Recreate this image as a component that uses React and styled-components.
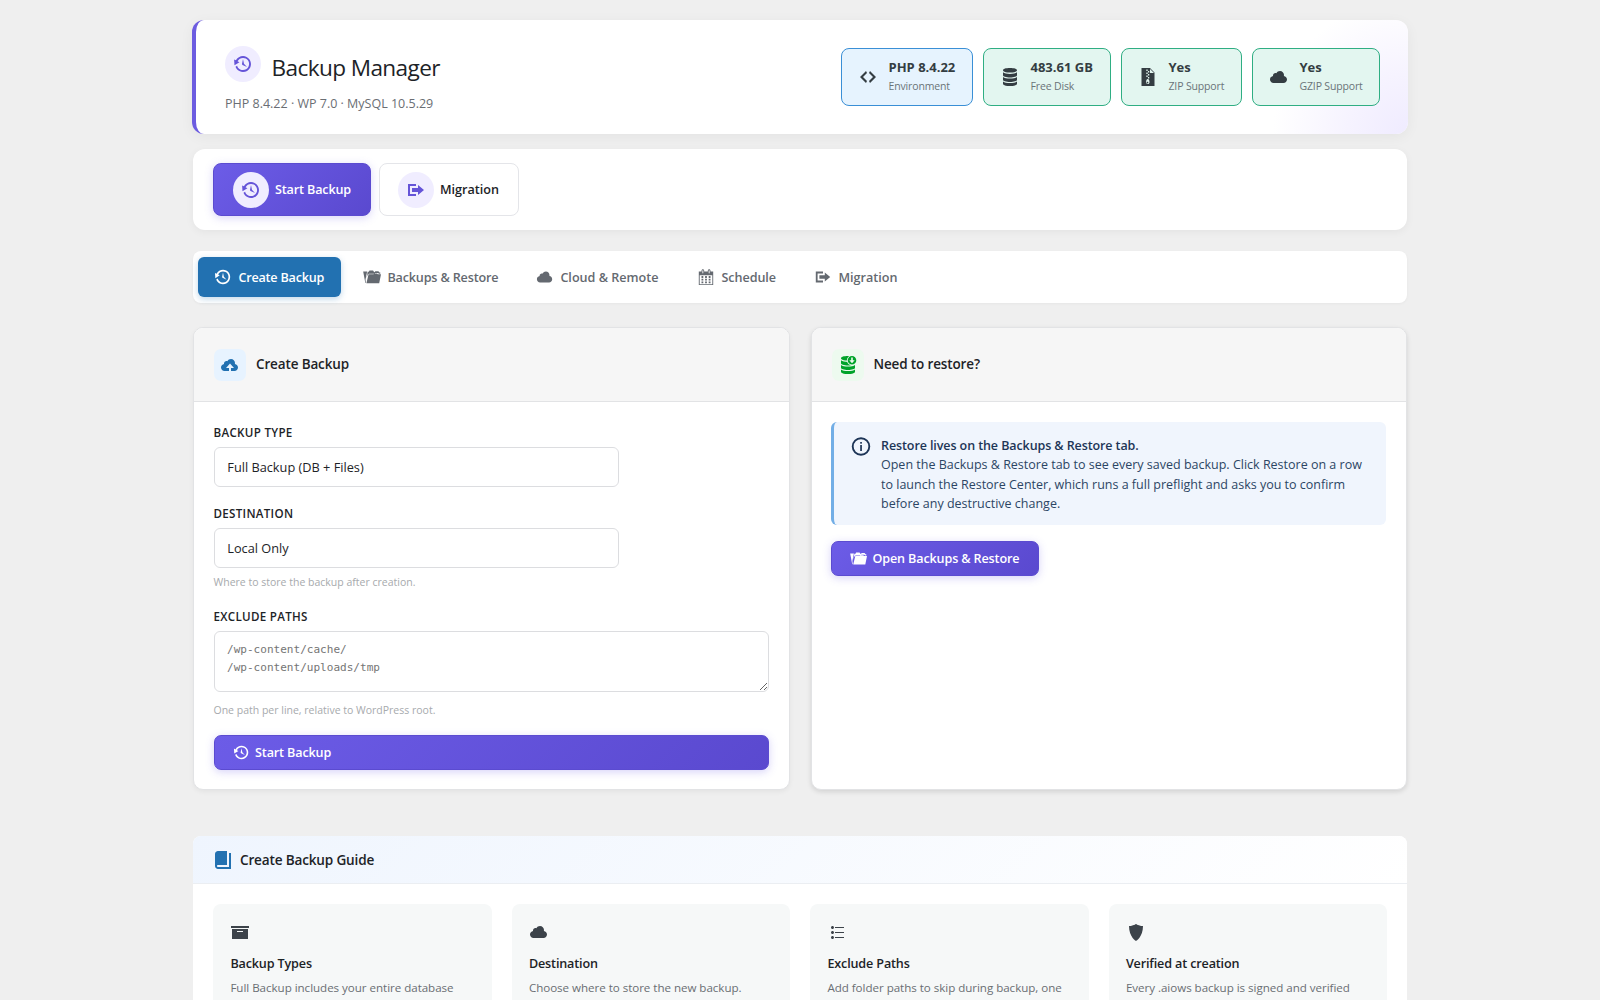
import styled, { createGlobalStyle } from "styled-components";

const GlobalStyle = createGlobalStyle`
  * {
    box-sizing: border-box;
  }

  body {
    margin: 0;
    height: 1000px;
    overflow: hidden;
    background: #efefef;
    color: #1d2327;
    font-family: "Open Sans", "Noto Sans", sans-serif;
    font-size: 12.5px;
  }
`;

const Page = styled.div`
  width: 1214px;
  height: 1000px;
  margin-left: 193px;
  padding-top: 20px;
`;

const Hero = styled.header`
  display: flex;
  justify-content: space-between;
  align-items: flex-start;
  height: 114px;
  margin: 0 -1px 15px;
  padding: 26px 28px 0 29px;
  border-left: 4px solid #6c5ce0;
  border-radius: 12px;
  background:
    radial-gradient(circle at 100% 100%, #efebff 0, #f6f3ff 60px, rgba(255, 255, 255, 0) 135px),
    #fff;
  box-shadow: 0 3px 14px rgba(0, 0, 0, 0.05);
`;

const HeroTitle = styled.div`
  display: flex;
  align-items: flex-start;
  height: 36px;
  gap: 10.5px;

  h1 {
    margin: 6px 0 0;
    font-size: 22.6px;
    font-weight: 400;
    line-height: 32px;
    letter-spacing: -0.6px;
  }
`;

const HeroMeta = styled.p`
  margin: 11.5px 0 0;
  color: #6a6e73;
  font-size: 12.5px;
  line-height: 20px;
`;

const Circle = styled.span`
  display: flex;
  align-items: center;
  justify-content: center;
  width: 36px;
  height: 36px;
  border-radius: 50%;
  background: #f0edff;
  color: #6554d8;
`;

const Stats = styled.div`
  display: flex;
  gap: 10px;
  padding-top: 2px;
`;

const StatBox = styled.div`
  display: flex;
  align-items: center;
  gap: 10.5px;
  width: ${(props) => props.$width}px;
  height: 58px;
  padding-left: 16px;
  border: 1px solid ${(props) => (props.$info ? "#3a8fd6" : "#2fae83")};
  border-radius: 8px;
  background: ${(props) => (props.$info ? "#e6f3fe" : "#e3f6f0")};
  color: #343d42;
  white-space: nowrap;

  strong {
    display: block;
    font-size: 13px;
    font-weight: 700;
    line-height: 19px;
  }

  small {
    display: block;
    color: #6a7378;
    font-size: 10.5px;
    line-height: 19px;
    letter-spacing: -0.15px;
  }
`;

const Toolbar = styled.div`
  display: flex;
  gap: 8px;
  height: 81px;
  margin-bottom: 21px;
  padding: 14px 20px;
  border-radius: 12px;
  background: #fff;
  box-shadow: 0 2px 8px rgba(0, 0, 0, 0.05);
`;

const ToolButton = styled.button`
  display: flex;
  align-items: center;
  gap: 6px;
  width: ${(props) => props.$width}px;
  height: 53px;
  padding: 0 0 0 ${(props) => (props.$primary ? 19 : 18)}px;
  border: 1px solid ${(props) => (props.$primary ? "#5b4bd0" : "#e4e5e9")};
  border-radius: 8px;
  background: ${(props) =>
    props.$primary ? "linear-gradient(135deg, #6c5ce7, #5a49cf)" : "#fff"};
  box-shadow: ${(props) =>
    props.$primary ? "0 2px 8px rgba(108, 92, 231, 0.25)" : "none"};
  color: ${(props) => (props.$primary ? "#fff" : "#1d2327")};
  font: 600 12.6px "Open Sans", sans-serif;
  letter-spacing: ${(props) => (props.$primary ? "-0.15px" : "0")};
  white-space: nowrap;
`;

const Tabs = styled.nav`
  display: flex;
  gap: 6px;
  height: 52px;
  margin-bottom: 24px;
  padding: 6px 5.4px;
  border-radius: 8px;
  background: #fff;
  box-shadow: 0 1px 3px rgba(0, 0, 0, 0.04);
`;

const Tab = styled.button`
  display: flex;
  align-items: center;
  gap: 6px;
  width: ${(props) => props.$width}px;
  height: 40px;
  padding: 0 0 0 16px;
  border: 0;
  border-radius: 6px;
  background: ${(props) => (props.$active ? "#2271b1" : "transparent")};
  box-shadow: ${(props) =>
    props.$active ? "0 2px 6px rgba(34, 113, 177, 0.28)" : "none"};
  color: ${(props) => (props.$active ? "#fff" : "#646970")};
  font: 600 12.6px "Open Sans", sans-serif;
  letter-spacing: ${(props) => props.$track}px;
  white-space: nowrap;
`;

const Columns = styled.div`
  display: grid;
  grid-template-columns: 1fr 1fr;
  gap: 21px;
  height: 463px;
  margin-bottom: 46px;
`;

const Card = styled.section`
  border: 1px solid #e2e3e5;
  border-radius: 10px;
  background: #fff;
  box-shadow: 0 2px 5px rgba(0, 0, 0, ${(props) => (props.$raised ? 0.12 : 0.05)});
  overflow: hidden;
`;

const CardHeader = styled.div`
  display: flex;
  align-items: center;
  gap: 10px;
  height: 74px;
  padding: 0 20px;
  border-bottom: 1px solid #e2e3e5;
  background: #f6f6f6;

  h2 {
    margin: 0 0 2px;
    font-size: 13.5px;
    font-weight: 600;
    line-height: 20px;
    letter-spacing: -0.14px;
  }
`;

const IconTile = styled.span`
  display: flex;
  align-items: center;
  justify-content: center;
  width: 32px;
  height: 32px;
  border-radius: 7px;
  background: ${(props) => props.$bg};
  color: ${(props) => props.$color};
`;

const CardBody = styled.div`
  padding: 20px 20px 20px 19.5px;
`;

const Label = styled.label`
  display: block;
  height: 25px;
  padding-top: 1px;
  font-size: 11.6px;
  font-weight: 600;
  line-height: 20px;
  letter-spacing: 0.3px;
  text-transform: uppercase;
`;

const SelectBox = styled.div`
  width: 405px;
  height: 40px;
  margin: 0 0 ${(props) => props.$gap}px 0.8px;
  padding-left: 12px;
  border: 1px solid #dcdde0;
  border-radius: 6px;
  font-size: 12.75px;
  line-height: 39px;
`;

const Hint = styled.p`
  margin: 0 0 ${(props) => props.$gap}px;
  color: #a7aaad;
  font-size: 10.5px;
  line-height: 16px;
`;

const PathsInput = styled.textarea`
  display: block;
  width: 100%;
  height: 61px;
  margin-bottom: 10px;
  padding: 9px 12.5px;
  border: 1px solid #dcdde0;
  border-radius: 6px;
  font: 11.05px/18.2px "DejaVu Sans Mono", monospace;
  resize: vertical;
  overflow: hidden;

  &::placeholder {
    color: #757575;
  }
`;

const PrimaryButton = styled.button`
  display: flex;
  align-items: center;
  gap: 5.5px;
  width: ${(props) => props.$width};
  height: 35px;
  padding: 0 0 0 18px;
  border: 1px solid #5b4bd0;
  border-radius: 7px;
  background: linear-gradient(135deg, #6c5ce7, #5a49cf);
  box-shadow: 0 2px 8px rgba(108, 92, 231, 0.28);
  color: #fff;
  font: 600 12.6px "Open Sans", sans-serif;
  letter-spacing: -0.14px;
  white-space: nowrap;
`;

const Notice = styled.div`
  display: flex;
  gap: 9.5px;
  height: 103px;
  margin-bottom: 16px;
  padding: 13.5px 14px 0 15.5px;
  border-left: 3px solid #72aee6;
  border-radius: 6px;
  background: #f0f5fd;
  color: #2c4564;
  white-space: nowrap;

  p {
    margin: 0;
    line-height: 19.6px;
  }

  strong {
    color: #1d3557;
    font-weight: 600;
    letter-spacing: -0.09px;
  }
`;

const Guide = styled.section`
  height: 164px;
  border-radius: 8px 8px 0 0;
  background: #fff;
  overflow: hidden;
`;

const GuideHeader = styled.div`
  display: flex;
  align-items: center;
  gap: 7px;
  height: 48px;
  padding: 0 20px;
  border-bottom: 1px solid #ebeef2;
  background: linear-gradient(135deg, #eff5fe, #fff);

  svg {
    color: #2271b1;
  }

  h2 {
    margin: 0;
    font-size: 13.6px;
    font-weight: 600;
    letter-spacing: -0.18px;
  }
`;

const GuideGrid = styled.div`
  display: grid;
  grid-template-columns: repeat(4, 1fr);
  gap: 20px;
  padding: 20px 20px 0;
`;

const GuideItem = styled.article`
  height: 96px;
  padding: 18px 17.4px 0;
  border-radius: 8px 8px 0 0;
  background: #f6f8f8;
  color: #3c434a;

  h3 {
    margin: 12px 0 4px;
    color: #1d2327;
    font-size: 12.6px;
    font-weight: 600;
    line-height: 20px;
    letter-spacing: -0.15px;
  }

  p {
    margin: 0;
    color: #6a6e73;
    font-size: 11.6px;
    line-height: 19px;
    letter-spacing: -0.04px;
    white-space: nowrap;
  }
`;

const Svg = styled.svg`
  display: block;
  flex: none;
  fill: currentColor;
`;

const ICONS = {
  backup:
    "M13.65 2.88c3.93 2.01 5.48 6.84 3.47 10.77s-6.83 5.48-10.77 3.47c-1.87-.96-3.2-2.56-3.86-4.4l1.64-1.03c.45 1.57 1.52 2.95 3.08 3.76 3.01 1.54 6.69.35 8.23-2.66 1.55-3.01.36-6.69-2.65-8.24C9.78 3.01 6.1 4.2 4.56 7.21l1.88.97-4.95 3.08-.39-5.82 1.78.91C4.9 2.4 9.75.89 13.65 2.88zm-4.36 7.83C9.11 10.53 9 10.28 9 10c0-.07.03-.12.04-.19h-.01L10 5l.97 4.81L14 13l-4.5-2.12.02-.02c-.08-.04-.16-.09-.23-.15z",
  migrate: "M4 6h6V4H2v12.01h8V14H4V6zm2 2h6V5l6 5-6 5v-3H6V8z",
  cloud:
    "M14.9 9c1.8.2 3.1 1.7 3.1 3.5 0 1.9-1.6 3.5-3.5 3.5h-10C2.6 16 1 14.4 1 12.5 1 10.7 2.3 9.3 4.1 9 4 8.9 4 8.7 4 8.5 4 7.1 5.1 6 6.5 6c.3 0 .7.1.9.2C8.1 4.9 9.4 4 11 4c2.2 0 4 1.8 4 4 0 .4-.1.7-.1 1z",
  cloudUpload:
    "M14.9 9c1.8.2 3.1 1.7 3.1 3.5 0 1.9-1.6 3.5-3.5 3.5H11v-3h3l-4-4.5L6 13h3v3H4.5C2.6 16 1 14.4 1 12.5 1 10.7 2.3 9.3 4.1 9 4 8.9 4 8.7 4 8.5 4 7.1 5.1 6 6.5 6c.3 0 .7.1.9.2C8.1 4.9 9.4 4 11 4c2.2 0 4 1.8 4 4 0 .4-.1.7-.1 1z",
  code: "M9 6l-4 4 4 4-1 2-6-6 6-6zm2 8l4-4-4-4 1-2 6 6-6 6z",
  calendar:
    "M15 4h3v15H2V4h3V3c0-.41.15-.76.44-1.06.29-.29.65-.44 1.06-.44s.77.15 1.06.44c.29.3.44.65.44 1.06v1h4V3c0-.41.15-.76.44-1.06.29-.29.65-.44 1.06-.44s.77.15 1.06.44c.29.3.44.65.44 1.06v1zM6 3v2.5c0 .14.05.26.15.36.09.09.21.14.35.14s.26-.05.35-.14c.1-.1.15-.22.15-.36V3c0-.14-.05-.26-.15-.35-.09-.1-.21-.15-.35-.15s-.26.05-.35.15c-.1.09-.15.21-.15.35zm7 0v2.5c0 .14.05.26.14.36.1.09.22.14.36.14s.26-.05.36-.14c.09-.1.14-.22.14-.36V3c0-.14-.05-.26-.14-.35-.1-.1-.22-.15-.36-.15s-.26.05-.36.15c-.09.09-.14.21-.14.35zm4 15V8H3v10h14zM7 9v2H5V9h2zm2 0h2v2H9V9zm4 2V9h2v2h-2zm-6 1v2H5v-2h2zm2 0h2v2H9v-2zm4 2v-2h2v2h-2zm-6 1v2H5v-2h2zm4 2H9v-2h2v2zm4 0h-2v-2h2v2z",
  folder:
    "M.2 4h4.400L2.800 12.800 3.200 16.800H2.600zM5.200 4.300h1.300l.7-1.500h4l.9 1.400.7.400.9-1h3.400l1.200 1.500h.9v1.300h-1.500l-.9-.9h-3.200l-1.100.9H6.600l-1.500 1.100-1.200 4zM6.200 7h5.500l1.100-.9h2.800l.9.9H20l-2 10H3.800z",
  database:
    "M10 1c4.2 0 7 .9 7 2.3S14.2 5.6 10 5.6 3 4.7 3 3.3 5.8 1 10 1zM3 5.3C4.3 6.4 7 6.9 10 6.9s5.7-.5 7-1.6v2.9c0 1.3-3 2.2-7 2.2s-7-.9-7-2.2zM3 10c1.3 1.1 4 1.6 7 1.6s5.7-.5 7-1.6v2.7c0 1.3-3 2.2-7 2.2s-7-.9-7-2.2zM3 14.5c1.3 1.1 4 1.6 7 1.6s5.7-.5 7-1.6v2.2c0 1.4-3 2.3-7 2.3s-7-.9-7-2.3z",
  book: "M16 3h2v16H5c-1.66 0-3-1.34-3-3V4c0-1.66 1.34-3 3-3h9v14H5c-.55 0-1 .45-1 1s.45 1 1 1h11V3z",
  archive: "M19 4v2H1V4h18zM2 7h16v10H2V7zm11 3V9H7v1h6z",
  list: "M5.5 7C4.67 7 4 6.33 4 5.5 4 4.68 4.67 4 5.5 4 6.32 4 7 4.68 7 5.5 7 6.33 6.32 7 5.5 7zM8 5h9v1H8V5zm-2.5 7c-.83 0-1.5-.67-1.5-1.5C4 9.68 4.67 9 5.5 9c.82 0 1.5.68 1.5 1.5 0 .83-.68 1.5-1.5 1.5zM8 10h9v1H8v-1zm-2.5 7c-.83 0-1.5-.67-1.5-1.5 0-.82.67-1.5 1.5-1.5.82 0 1.5.68 1.5 1.5 0 .83-.68 1.5-1.5 1.5zM8 15h9v1H8v-1z",
  shield: "M10 2s3 2 7 2c0 11-7 15-7 15S3 15 3 4c4 0 7-2 7-2z",
};

function Icon({ name, size = 20 }) {
  return (
    <Svg width={size} height={size} viewBox="0 0 20 20">
      <path d={ICONS[name]} />
    </Svg>
  );
}

function ZipIcon() {
  return (
    <Svg width="20" height="20" viewBox="0 0 20 20">
      <path fillRule="evenodd" d="M3.5 1H12l4.500 4.500V19h-13zM12 2v4h4z" />
      <path
        d="M9 2.500v1.500M10.600 4v1.500M9 5.500V7M10.600 7v1.500M9 8.500V10M10.600 10v1.500"
        stroke="#e3f6f0"
        strokeWidth="1.3"
      />
      <path
        d="M9.800 12c1.200 0 1.700 1.500 1.700 3.200 0 1-.7 1.800-1.700 1.800s-1.700-.8-1.700-1.800c0-1.700.5-3.200 1.700-3.200zm0 2.800a.8.8 0 1 0 0 1.500.8.8 0 0 0 0-1.500z"
        fill="#e3f6f0"
      />
    </Svg>
  );
}

function RestoreIcon() {
  return (
    <Svg width="20" height="20" viewBox="0 0 20 20">
      <path d={ICONS.database} />
      <circle cx="14" cy="5.3" r="5.1" fill="#edfaef" />
      <path
        fillRule="evenodd"
        d="M14 1a4.300 4.300 0 1 1 0 8.600A4.300 4.300 0 0 1 14 1zm-.8 1.500v2.700h-1.900L14 8.200l2.700-3h-1.900V2.500z"
      />
    </Svg>
  );
}

function InfoIcon() {
  return (
    <Svg width="22" height="22" viewBox="0 0 22 22">
      <circle cx="11" cy="10.5" r="8.3" fill="none" stroke="#1d3557" strokeWidth="1.9" />
      <rect x="10.2" y="6" width="1.7" height="1.7" fill="#1d3557" />
      <rect x="10.2" y="9" width="1.7" height="6" fill="#1d3557" />
    </Svg>
  );
}

const stats = [
  { icon: <Icon name="code" />, value: "PHP 8.4.22", label: "Environment", width: 132, info: true },
  { icon: <Icon name="database" />, value: "483.61 GB", label: "Free Disk", width: 128 },
  { icon: <ZipIcon />, value: "Yes", label: "ZIP Support", width: 121 },
  { icon: <Icon name="cloud" />, value: "Yes", label: "GZIP Support", width: 128 },
];

const tabs = [
  { icon: "backup", label: "Create Backup", width: 143, track: -0.2 },
  { icon: "folder", label: "Backups & Restore", width: 167, track: -0.16 },
  { icon: "cloud", label: "Cloud & Remote", width: 155, track: 0 },
  { icon: "calendar", label: "Schedule", width: 111, track: -0.05 },
  { icon: "migrate", label: "Migration", width: 116, track: 0 },
];

const guideItems = [
  { icon: "archive", title: "Backup Types", text: "Full Backup includes your entire database" },
  { icon: "cloud", title: "Destination", text: "Choose where to store the new backup." },
  { icon: "list", title: "Exclude Paths", text: "Add folder paths to skip during backup, one" },
  { icon: "shield", title: "Verified at creation", text: "Every .aiows backup is signed and verified" },
];

function App() {
  return (
    <>
      <GlobalStyle />
      <Page>
        <Hero>
          <div>
            <HeroTitle>
              <Circle>
                <Icon name="backup" />
              </Circle>
              <h1>Backup Manager</h1>
            </HeroTitle>
            <HeroMeta>PHP 8.4.22 · WP 7.0 · MySQL 10.5.29</HeroMeta>
          </div>
          <Stats>
            {stats.map((stat) => (
              <StatBox key={stat.label} $width={stat.width} $info={stat.info}>
                {stat.icon}
                <div>
                  <strong>{stat.value}</strong>
                  <small>{stat.label}</small>
                </div>
              </StatBox>
            ))}
          </Stats>
        </Hero>

        <Toolbar>
          <ToolButton $primary $width={158}>
            <Circle>
              <Icon name="backup" />
            </Circle>
            Start Backup
          </ToolButton>
          <ToolButton $width={140}>
            <Circle>
              <Icon name="migrate" />
            </Circle>
            Migration
          </ToolButton>
        </Toolbar>

        <Tabs>
          {tabs.map((tab, i) => (
            <Tab key={tab.label} $active={i === 0} $width={tab.width} $track={tab.track}>
              <Icon name={tab.icon} size={18} />
              {tab.label}
            </Tab>
          ))}
        </Tabs>

        <Columns>
          <Card>
            <CardHeader>
              <IconTile $bg="#e7f3ff" $color="#2271b1">
                <Icon name="cloudUpload" />
              </IconTile>
              <h2>Create Backup</h2>
            </CardHeader>
            <CardBody>
              <Label>Backup Type</Label>
              <SelectBox $gap={16}>Full Backup (DB + Files)</SelectBox>
              <Label>Destination</Label>
              <SelectBox $gap={6}>Local Only</SelectBox>
              <Hint $gap={16}>Where to store the backup after creation.</Hint>
              <Label>Exclude Paths</Label>
              <PathsInput placeholder={"/wp-content/cache/\n/wp-content/uploads/tmp"} />
              <Hint $gap={17}>One path per line, relative to WordPress root.</Hint>
              <PrimaryButton $width="100%">
                <Icon name="backup" size={17} />
                Start Backup
              </PrimaryButton>
            </CardBody>
          </Card>

          <Card $raised>
            <CardHeader>
              <IconTile $bg="#edfaef" $color="#00a32a">
                <RestoreIcon />
              </IconTile>
              <h2>Need to restore?</h2>
            </CardHeader>
            <CardBody>
              <Notice>
                <InfoIcon />
                <p>
                  <strong>Restore lives on the Backups &amp; Restore tab.</strong>
                  <br />
                  Open the Backups &amp; Restore tab to see every saved backup. Click Restore on a row
                  <br />
                  to launch the Restore Center, which runs a full preflight and asks you to confirm
                  <br />
                  before any destructive change.
                </p>
              </Notice>
              <PrimaryButton $width="208px">
                <Icon name="folder" size={17} />
                Open Backups &amp; Restore
              </PrimaryButton>
            </CardBody>
          </Card>
        </Columns>

        <Guide>
          <GuideHeader>
            <Icon name="book" />
            <h2>Create Backup Guide</h2>
          </GuideHeader>
          <GuideGrid>
            {guideItems.map((item) => (
              <GuideItem key={item.title}>
                <Icon name={item.icon} />
                <h3>{item.title}</h3>
                <p>{item.text}</p>
              </GuideItem>
            ))}
          </GuideGrid>
        </Guide>
      </Page>
    </>
  );
}

export default App;
